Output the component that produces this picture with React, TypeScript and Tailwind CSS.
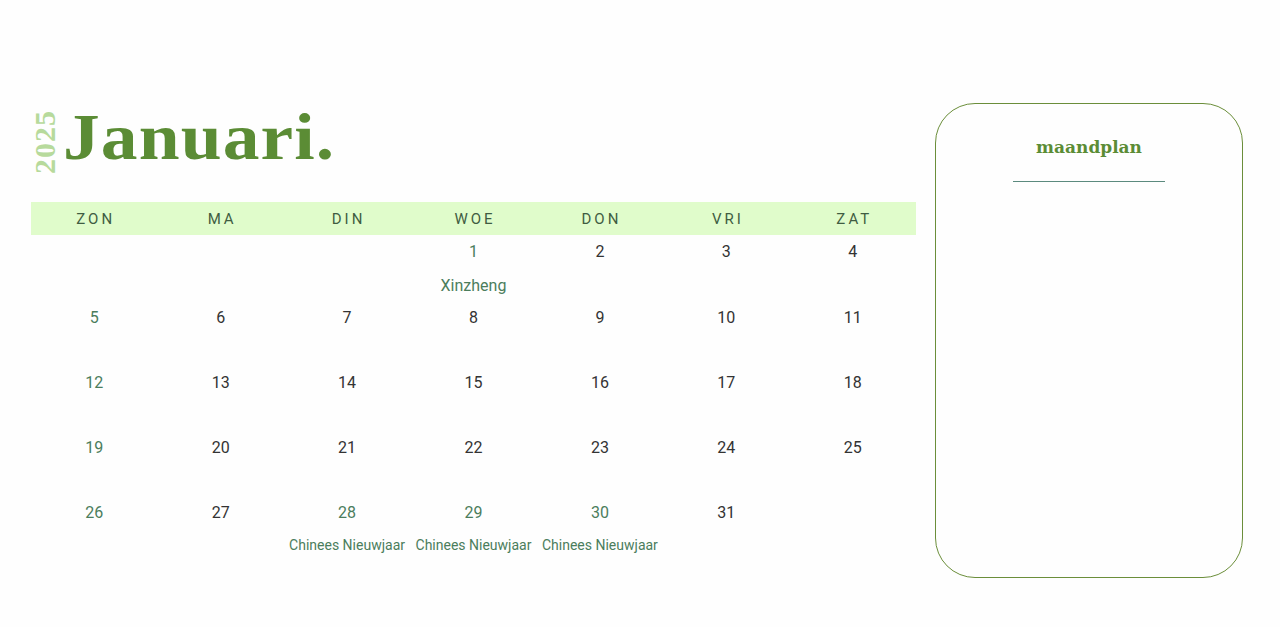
import React from "react";

const days = ["ZON", "MA", "DIN", "WOE", "DON", "VRI", "ZAT"];

type Cell = { n?: number; green?: boolean; note?: string };

const rows: Cell[][] = [
  [{}, {}, {}, { n: 1, green: true, note: "Xinzheng" }, { n: 2 }, { n: 3 }, { n: 4 }],
  [{ n: 5, green: true }, { n: 6 }, { n: 7 }, { n: 8 }, { n: 9 }, { n: 10 }, { n: 11 }],
  [{ n: 12, green: true }, { n: 13 }, { n: 14 }, { n: 15 }, { n: 16 }, { n: 17 }, { n: 18 }],
  [{ n: 19, green: true }, { n: 20 }, { n: 21 }, { n: 22 }, { n: 23 }, { n: 24 }, { n: 25 }],
  [
    { n: 26, green: true },
    { n: 27 },
    { n: 28, green: true, note: "Chinees Nieuwjaar" },
    { n: 29, green: true, note: "Chinees Nieuwjaar" },
    { n: 30, green: true, note: "Chinees Nieuwjaar" },
    { n: 31 },
    {},
  ],
];

export default function App() {
  return (
    <div className="w-[1280px] h-[627px] bg-[#fefefe] flex overflow-hidden font-['Roboto',sans-serif]">
      <div className="w-[916px] pl-[31px] pt-[104px] flex flex-col">
        <div className="flex items-center h-[76px] pl-[2px]">
          <div className="[writing-mode:vertical-rl] rotate-180 font-['Liberation_Serif',serif] font-bold text-[30px] leading-[24px] text-[#b7da9c] tracking-[1px]">
            2025
          </div>
          <div className="ml-[6px] mb-[9px] origin-left scale-x-[1.13] font-['Liberation_Serif',serif] font-bold text-[65px] leading-none tracking-[1px] text-[#5b8c35]">
            Januari.
          </div>
        </div>
        <div className="mt-[22px] grid grid-cols-7 h-[33px] bg-[#e0fccb] items-center pt-[2px]">
          {days.map((d) => (
            <div key={d} className="text-center text-[15px] tracking-[3px] text-[#3f5c42] pl-[3px]">
              {d}
            </div>
          ))}
        </div>
        {rows.map((r, i) => (
          <div key={i} className={`grid grid-cols-7 ${i === 0 ? "h-[66px]" : "h-[65px]"}`}>
            {r.map((c, j) => (
              <div key={j} className="flex flex-col items-center pt-[7px]">
                {c.n !== undefined && (
                  <div className={`text-[16px] leading-[20px] ${c.green ? "text-[#4b7d5c]" : "text-[#333333]"}`}>
                    {c.n}
                  </div>
                )}
                {c.note && (
                  <div
                    className={`${c.note === "Xinzheng" ? "mt-[14px] text-[16px]" : "mt-[12px] text-[14px]"} leading-[20px] text-[#4b7d5c] whitespace-nowrap`}
                  >
                    {c.note}
                  </div>
                )}
              </div>
            ))}
          </div>
        ))}
      </div>
      <div className="ml-[19px] mt-[103px] w-[308px] h-[475px] border border-[#6b8e3a] rounded-[40px] flex flex-col items-center">
        <div className="mt-[33px] font-['DejaVu_Serif',serif] font-bold text-[17px] leading-[20px] text-[#5b8c35]">
          maandplan
        </div>
        <div className="mt-[24px] w-[152px] h-px bg-[#5b8a7e]" />
      </div>
    </div>
  );
}
